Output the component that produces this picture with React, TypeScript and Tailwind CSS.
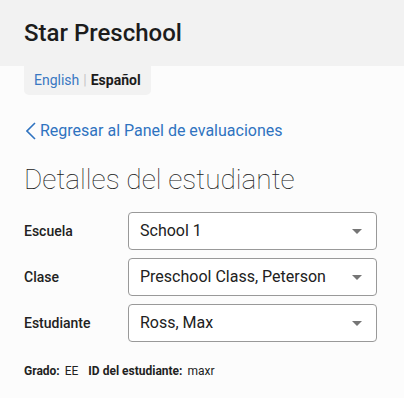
const fields = [
    { label: 'Escuela', value: 'School 1' },
    { label: 'Clase', value: 'Preschool Class, Peterson' },
    { label: 'Estudiante', value: 'Ross, Max' },
];

function SelectBox({ value }: { value: string }) {
    return (
        <div className="w-[249px] h-[38px] flex items-center justify-between pl-[11px] pr-[14px] border border-[#999] rounded-[4px] bg-white">
            <span className="text-[16px] text-[#212121]">{value}</span>
            <span className="w-0 h-0 border-l-[5px] border-r-[5px] border-t-[5px] border-l-transparent border-r-transparent border-t-[#757575]" />
        </div>
    );
}

export default function App() {
    return (
        <div className="w-[404px] h-[398px] bg-[#fcfcfc] text-[#212121]" style={{ fontFamily: 'Roboto, "Liberation Sans", sans-serif' }}>
            <header className="h-[66px] bg-[#f2f2f2] flex items-center px-6">
                <h1 className="text-[24px] font-medium text-[#1c1c1c]">Star Preschool</h1>
            </header>

            <div className="ml-6 inline-flex items-center h-[29px] px-[10px] bg-[#f2f2f2] rounded-b-[5px] text-[14px]">
                <span className="text-[#3a78c2]">English</span>
                <span className="mx-[4px] text-[#c8c8c8]">|</span>
                <span className="font-bold text-[#1c1c1c]">Español</span>
            </div>

            <div className="px-6">
                <a className="mt-[24px] flex items-center text-[16px] text-[#2f73c0]">
                    <svg className="w-[10px] h-[18px] ml-[2px] mr-[4px]" viewBox="0 0 10 18" fill="none" stroke="currentColor" strokeWidth={1.6}>
                        <path d="M9 1 1 9l8 8" />
                    </svg>
                    Regresar al Panel de evaluaciones
                </a>

                <h2 className="mt-[20px] text-[28px] font-thin leading-[34px] text-[#222]">Detalles del estudiante</h2>

                <div className="mt-[15px] flex flex-col gap-[8px]">
                    {fields.map((f) => (
                        <div key={f.label} className="flex items-center">
                            <span className="w-[104px] text-[14px] font-medium text-[#222]">{f.label}</span>
                            <SelectBox value={f.value} />
                        </div>
                    ))}
                </div>

                <div className="mt-[20px] flex items-center text-[12px] text-[#222]">
                    <span className="font-bold">Grado:</span>
                    <span className="ml-[5px]">EE</span>
                    <span className="ml-[10px] font-bold">ID del estudiante:</span>
                    <span className="ml-[5px]">maxr</span>
                </div>
            </div>
        </div>
    );
}
